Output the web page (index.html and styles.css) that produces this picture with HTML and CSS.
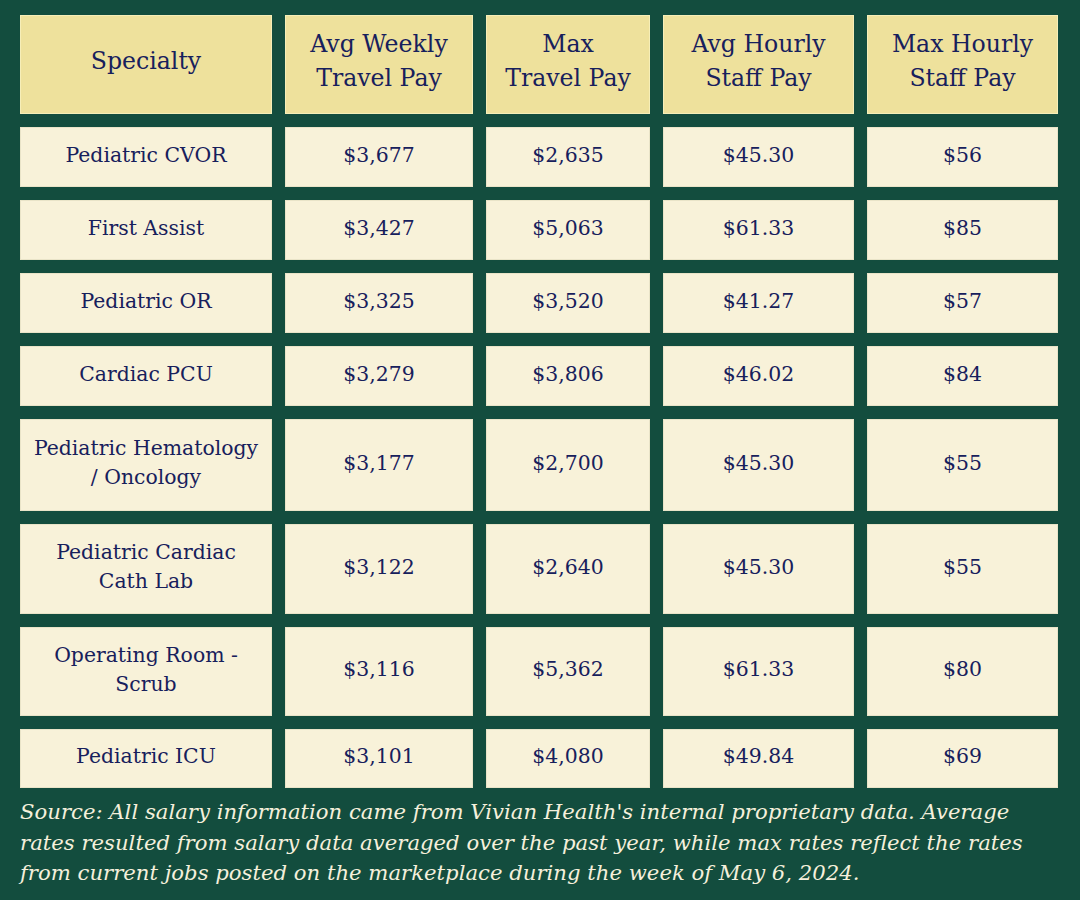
FILE: index.html
```html
<!DOCTYPE html>
<html>
<head>
<meta charset="utf-8">
<link rel="stylesheet" href="styles.css">
</head>
<body>
<div class="page">
  <div class="table">
    <div class="cell head">Specialty</div>
    <div class="cell head">Avg Weekly<br>Travel Pay</div>
    <div class="cell head">Max<br>Travel Pay</div>
    <div class="cell head">Avg Hourly<br>Staff Pay</div>
    <div class="cell head">Max Hourly<br>Staff Pay</div>

    <div class="cell">Pediatric CVOR</div>
    <div class="cell">$3,677</div>
    <div class="cell">$2,635</div>
    <div class="cell">$45.30</div>
    <div class="cell">$56</div>

    <div class="cell">First Assist</div>
    <div class="cell">$3,427</div>
    <div class="cell">$5,063</div>
    <div class="cell">$61.33</div>
    <div class="cell">$85</div>

    <div class="cell">Pediatric OR</div>
    <div class="cell">$3,325</div>
    <div class="cell">$3,520</div>
    <div class="cell">$41.27</div>
    <div class="cell">$57</div>

    <div class="cell">Cardiac PCU</div>
    <div class="cell">$3,279</div>
    <div class="cell">$3,806</div>
    <div class="cell">$46.02</div>
    <div class="cell">$84</div>

    <div class="cell">Pediatric Hematology<br>/ Oncology</div>
    <div class="cell">$3,177</div>
    <div class="cell">$2,700</div>
    <div class="cell">$45.30</div>
    <div class="cell">$55</div>

    <div class="cell">Pediatric Cardiac<br>Cath Lab</div>
    <div class="cell">$3,122</div>
    <div class="cell">$2,640</div>
    <div class="cell">$45.30</div>
    <div class="cell">$55</div>

    <div class="cell">Operating Room -<br>Scrub</div>
    <div class="cell">$3,116</div>
    <div class="cell">$5,362</div>
    <div class="cell">$61.33</div>
    <div class="cell">$80</div>

    <div class="cell">Pediatric ICU</div>
    <div class="cell">$3,101</div>
    <div class="cell">$4,080</div>
    <div class="cell">$49.84</div>
    <div class="cell">$69</div>
  </div>
  <p class="source">Source: All salary information came from Vivian Health's internal proprietary data. Average rates resulted from salary data averaged over the past year, while max rates reflect the rates from current jobs posted on the marketplace during the week of May 6, 2024.</p>
</div>
</body>
</html>
```

FILE: styles.css
```css
html, body {
  margin: 0;
  padding: 0;
  background: #134d3e;
}
.page {
  width: 1080px;
  height: 900px;
  box-sizing: border-box;
  padding: 15px 21px 0 20px;
  font-family: "DejaVu Serif", "Liberation Serif", serif;
  color: #17205c;
}
.table {
  display: grid;
  grid-template-columns: 252px 188px 164px 191px 191px;
  grid-template-rows: 99px 60px 60px 60px 60px 92px 90px 89px 59px;
  column-gap: 13px;
  row-gap: 13px;
}
.cell {
  background: #f8f2d9;
  border: 1px solid #e9e4c8;
  box-sizing: border-box;
  display: flex;
  align-items: center;
  justify-content: center;
  text-align: center;
  font-size: 20.4px;
  line-height: 29px;
  padding-bottom: 4px;
}
.head {
  background: #eee19c;
  border-color: #f6eeb8;
  font-size: 23.6px;
  line-height: 34px;
  padding-bottom: 7px;
}
.source {
  margin: 9px 0 0 0;
  font-style: italic;
  font-size: 21.2px;
  line-height: 30.5px;
  color: #f5f0dc;
}
```
